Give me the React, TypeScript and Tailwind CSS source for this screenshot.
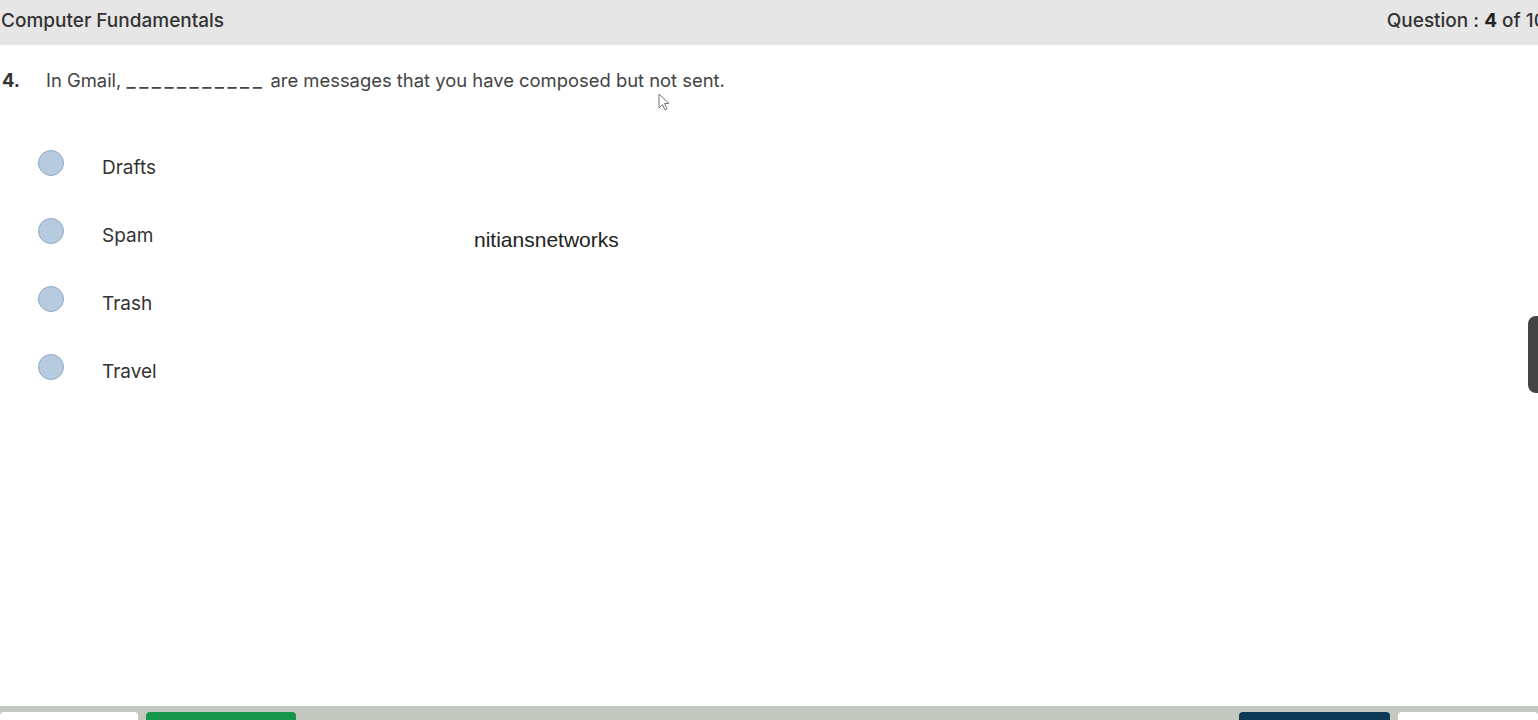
import React from "react";

const options = ["Drafts", "Spam", "Trash", "Travel"];

export default function App() {
  return (
    <div className="relative flex h-[720px] w-[1538px] flex-col overflow-hidden bg-white text-[#333]" style={{ fontFamily: "Inter, 'Noto Sans', sans-serif" }}>
      <div className="flex h-[45px] shrink-0 items-center justify-between bg-[#e6e6e6] pb-[3px]">
        <span className="pl-[1px] text-[19px] font-medium text-[#333]">Computer Fundamentals</span>
        <span className="-mr-[8px] whitespace-nowrap text-[19px] font-medium text-[#333]">
          Question : <span className="font-bold text-[#222]">4</span> of 10
        </span>
      </div>

      <div className="mt-[23px] flex items-center text-[18.4px] leading-[24px]">
        <span className="w-[46px] pl-[2px] font-bold text-[#333]">4.</span>
        <span className="text-[#444]">
          In Gmail, <span className="tracking-[3.5px] text-[20px]">___________</span> are messages that you have composed but not sent.
        </span>
      </div>

      <div className="mt-[37px] flex flex-col">
        {options.map((o) => (
          <div key={o} className="flex h-[68px] items-center pl-[38px]">
            <span className="h-[26px] w-[26px] shrink-0 rounded-full border border-[#8fa9c0] bg-[#b6cbdf]" />
            <span className="ml-[38px] mt-[11px] text-[19px] text-[#333]">{o}</span>
          </div>
        ))}
      </div>

      <div className="flex-1" />

      <div className="flex h-[14px] shrink-0 items-end gap-[8px] bg-[#c3c9c1] pt-[6px]">
        <div className="h-[8px] w-[138px] rounded-t-[4px] bg-white" />
        <div className="h-[8px] w-[150px] rounded-t-[4px] bg-[#16964a]" />
        <div className="flex-1" />
        <div className="h-[8px] w-[151px] rounded-t-[4px] bg-[#0c3a55]" />
        <div className="h-[8px] w-[140px] rounded-t-[4px] bg-white" />
      </div>

      <span
        className="absolute left-[474px] top-[224px] text-[21px] text-[#222]"
        style={{ fontFamily: "'Liberation Sans', Arial, sans-serif" }}
      >
        nitiansnetworks
      </span>

      <div className="absolute left-[1528px] top-[316px] h-[77px] w-[20px] rounded-[8px] bg-[#444]" />

      <svg className="absolute left-[658px] top-[93px]" width="14" height="20" viewBox="0 0 14 20">
        <path d="M1 1 L1 15 L4.5 11.5 L7 17 L9 16 L6.5 10.5 L11 10.5 Z" fill="#fff" stroke="#777" strokeWidth="1" />
      </svg>
    </div>
  );
}
